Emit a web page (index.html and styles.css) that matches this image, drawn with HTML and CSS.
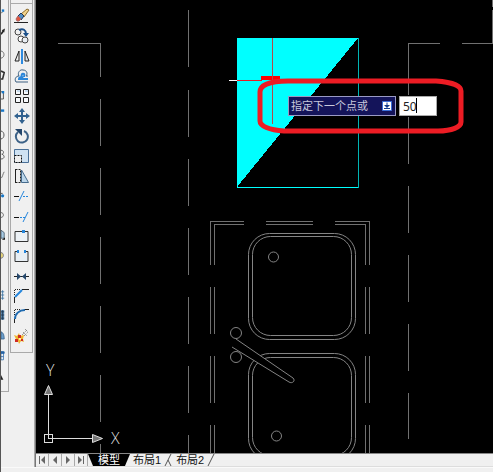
FILE: index.html
```html
<!DOCTYPE html>
<html lang="zh-CN">
<head>
  <meta charset="UTF-8" />
  <meta name="viewport" content="width=device-width, initial-scale=1.0"/>
  <title>CAD</title>
  <link rel="stylesheet" href="styles.css">
</head>
<body>

  <div class="workspace">

    <div class="dock">
      <div class="toolbar draw-tools">
        <button aria-label="直线"><svg viewBox="0 0 5 16"><path d="M0 6L2 4" stroke="#333"/><path d="M1 1h3v3H1z" fill="#1878c8"/></svg></button>
        <button aria-label="构造线"><svg viewBox="0 0 5 16"><path d="M0 7L3 3" stroke="#222" stroke-width="2"/><path d="M1 2l4-2-1 5z" fill="#222"/></svg></button>
        <button aria-label="圆弧"><svg viewBox="0 0 5 16"><path d="M0 3c5 1 5 8 0 9" fill="none" stroke="#555"/></svg></button>
        <button aria-label="多边形"><svg viewBox="0 0 5 16"><path d="M0 3l4 2-2 8H0" fill="none" stroke="#333" stroke-width="2"/></svg></button>
        <button aria-label="矩形"><svg viewBox="0 0 5 16"><path d="M0 4h3v9H0" fill="none" stroke="#333"/><path d="M1 3h3v3H1z" fill="#1878c8"/></svg></button>
        <button aria-label="多段线"><svg viewBox="0 0 5 16"><path d="M0 1h4v3H0z" fill="#1878c8"/></svg></button>
        <button aria-label="圆"><svg viewBox="0 0 5 16"><path d="M0 3c5 1 5 9 0 10" fill="none" stroke="#333" stroke-width="1"/></svg></button>
        <button aria-label="修订云线"><svg viewBox="0 0 5 16"><path d="M0 2c4 0 4 5 1 5 4 1 4 6-1 6" fill="none" stroke="#444" stroke-width="1"/></svg></button>
        <button aria-label="样条曲线"><svg viewBox="0 0 5 16"><path d="M0 12c2-1 2-5 4-8" fill="none" stroke="#555"/></svg></button>
        <button aria-label="椭圆"><svg viewBox="0 0 5 16"><path d="M0 6h2" stroke="#333"/><circle cx="2" cy="9" r="2" fill="#1878c8"/></svg></button>
        <button aria-label="椭圆弧"><svg viewBox="0 0 5 16"><path d="M0 5c4 0 4 6 0 6" fill="none" stroke="#555"/></svg></button>
        <button aria-label="插入块"><svg viewBox="0 0 5 16"><path d="M0 2l4 3v7H0z" fill="#a9cbe4" stroke="#456"/><path d="M1 14h4v-3z" fill="#111"/></svg></button>
        <button aria-label="创建块"><svg viewBox="0 0 5 16"><path d="M0 5c4 0 4 7 0 7" fill="#e8d77a" stroke="#667"/></svg></button>
        <button aria-label="点"><svg viewBox="0 0 5 16"></svg></button>
        <button aria-label="图案填充"><svg viewBox="0 0 5 16"><path d="M0 4h4M0 8h4M0 12h4M2 2v12" stroke="#35709f"/></svg></button>
        <button aria-label="渐变色"><svg viewBox="0 0 5 16"><path d="M0 2h4v12H0z" fill="#5d89ae"/><path d="M0 4h4M0 8h4M0 12h4M2 2v12" stroke="#1c3550"/></svg></button>
        <button aria-label="面域"><svg viewBox="0 0 5 16"><path d="M0 4c3 1 4 4 4 9H0z" fill="#6b9fcc" stroke="#35608a"/></svg></button>
        <button aria-label="表格"><svg viewBox="0 0 5 16"><path d="M0 4h3v10H0z" fill="#fff" stroke="#2765a6"/><path d="M0 4h4v2H0M0 10h3" stroke="#2765a6" fill="#2765a6"/></svg></button>
        <button aria-label="多行文字"><svg viewBox="0 0 5 16"><path d="M0 8l3 6H0z" fill="#222"/></svg></button>
      </div>

      <div class="toolbar-column">
        <div class="toolbar-end"></div>
        <div class="toolbar modify-tools">
          <button aria-label="删除">
            <svg viewBox="0 0 16 16">
              <path d="M0 14.500h14" stroke="#222"/>
              <path d="M7 6l6-5 2 1-5 7z" fill="#f0d28c" stroke="#8a6a2c"/>
              <path d="M4 8l3-3 3 3-3 4z" fill="#4f8dc5" stroke="#235"/>
              <path d="M2 11l2-3 3 3-2 2H3z" fill="#e2563f" stroke="#a66"/>
            </svg>
          </button>
          <button aria-label="复制">
            <svg viewBox="0 0 16 16" fill="none">
              <circle cx="4" cy="4" r="3" stroke="#444"/>
              <circle cx="7" cy="11" r="3" stroke="#444" fill="#fff"/>
              <circle cx="11" cy="12" r="3" stroke="#444" fill="#e8eef4"/>
              <path d="M5 2c4-2 7 0 7 4" stroke="#1a4f8a" stroke-width="2"/>
              <path d="M9 5h6l-3 4z" fill="#1a4f8a"/>
            </svg>
          </button>
          <button aria-label="镜像">
            <svg viewBox="0 0 16 16" fill="none">
              <path d="M5 3v10H1z" stroke="#222"/>
              <path d="M11 3v10h4z" stroke="#222" fill="#dde6ee"/>
              <path d="M8 1v15" stroke="#2d8ae0" stroke-width="2"/>
            </svg>
          </button>
          <button aria-label="偏移">
            <svg viewBox="0 0 16 16" fill="none">
              <path d="M14 14H2c-2-3 0-6 3-6-2-3 1-7 4-6 4 0 5 4 3 6h2" stroke="#3c5f80"/>
              <path d="M14 11H5c0-2 2-2 3-2-1-2 0-4 2-3 1 1 0 2 0 3" stroke="#2b86d9" stroke-width="2"/>
            </svg>
          </button>
          <button aria-label="阵列">
            <svg viewBox="0 0 16 16" fill="#f7f9fb" stroke="#222">
              <path d="M1.500 1.500h5v5h-5zM9.500 1.500h5v5h-5zM1.500 9.500h5v5h-5zM9.500 9.500h5v5h-5z"/>
              <path d="M3 3h3M11 3h3" stroke="#9cc1e3"/>
            </svg>
          </button>
          <button aria-label="移动">
            <svg viewBox="0 0 16 16" fill="#32628f">
              <path d="M8 0l3 4H9v3h3V5l4 3-4 3V9H9v3h2l-3 4-3-4h2V9H4v2L0 8l4-3v2h3V4H5z"/>
            </svg>
          </button>
          <button aria-label="旋转">
            <svg viewBox="0 0 16 16" fill="none">
              <path d="M10 3a6 6 0 1 1-6 1" stroke="#3d6287" stroke-width="2"/>
              <path d="M1 1h7v7z" fill="#24466b"/>
            </svg>
          </button>
          <button aria-label="缩放">
            <svg viewBox="0 0 16 16" fill="none">
              <path d="M.5 1.500h14v13H.5z" fill="#cfe2f2" stroke="#4a7097"/>
              <path d="M.5 7.500h7v7h-7z" fill="#eee" stroke="#111" stroke-dasharray="2 1"/>
            </svg>
          </button>
          <button aria-label="拉伸">
            <svg viewBox="0 0 16 16" fill="none">
              <path d="M1.500 1.500h5v13h-5z" stroke="#222" stroke-dasharray="2 1"/>
              <path d="M1.500 1v14" stroke="#222"/>
              <path d="M7.500 2l7 12.500h-7z" fill="#bcd6ea" stroke="#446a8c"/>
            </svg>
          </button>
          <button aria-label="修剪">
            <svg viewBox="0 0 16 16" fill="none">
              <path d="M0 8.500h5" stroke="#111" stroke-width="1"/>
              <path d="M5 13l5-10" stroke="#2586dc" stroke-width="1"/>
              <path d="M9 8.500h6" stroke="#2586dc" stroke-dasharray="2 1"/>
            </svg>
          </button>
          <button aria-label="延伸">
            <svg viewBox="0 0 16 16" fill="none">
              <path d="M0 9.500h5" stroke="#111" stroke-width="1"/>
              <path d="M6 9.500h5" stroke="#2586dc" stroke-dasharray="2 1"/>
              <path d="M9 14l5-10" stroke="#2586dc" stroke-width="1"/>
            </svg>
          </button>
          <button aria-label="打断于点">
            <svg viewBox="0 0 16 16">
              <path d="M1 3.500h13v10H1z" fill="#edf2f6" stroke="#333"/>
              <path d="M8 2h3v3H8z" fill="#2586dc"/>
            </svg>
          </button>
          <button aria-label="打断">
            <svg viewBox="0 0 16 16">
              <path d="M3 3.500H1v10h13v-10h-2" fill="#e7eef4" stroke="#333"/>
              <path d="M3 2h2v3H3zM10 2h2v3h-2z" fill="#2586dc"/>
            </svg>
          </button>
          <button aria-label="合并">
            <svg viewBox="0 0 16 16">
              <path d="M0 8.500h15" stroke="#222"/>
              <path d="M3 5l4 3.500L3 12zM12 5L8 8.500l4 3.500z" fill="#25476b"/>
            </svg>
          </button>
          <button aria-label="倒角">
            <svg viewBox="0 0 16 16" fill="none">
              <path d="M1 1.500h6M.5 2v6" stroke="#222" stroke-dasharray="1 1"/>
              <path d="M.5 15V9M8 1.500h7" stroke="#222"/>
              <path d="M1 9l7-7" stroke="#2586dc" stroke-width="2"/>
            </svg>
          </button>
          <button aria-label="圆角">
            <svg viewBox="0 0 16 16" fill="none">
              <path d="M1 1.500h6M.5 2v6" stroke="#222" stroke-dasharray="1 1"/>
              <path d="M.5 15v-4M10 1.500h5" stroke="#222"/>
              <path d="M1 11c0-5 4-9 10-9" stroke="#206bb0" stroke-width="2"/>
            </svg>
          </button>
          <button aria-label="分解">
            <svg viewBox="0 0 16 16">
              <path d="M0 7l3 1 2-3 1 3 4-1-1 4 1 3-3-1-2 3-1-3-3 1 1-3z" fill="#f0b52e"/>
              <path d="M1 11h3v3H1zM4 7h3v3H4zM7 11h2v2H7z" fill="#d02a22"/>
              <path d="M8 7l5-5M10 8l4-4M9 4l4 4M11 1l3 3" stroke="#777" stroke-dasharray="1 1"/>
              <path d="M5 10h2v2H5z" fill="#fff3a0"/>
            </svg>
          </button>
        </div>
      </div>
    </div>

    <main class="viewport">
      <div class="canvas">
        <svg class="drawing">
          <!-- drawing units start at the window edge, the dock takes 36 of them -->
          <g transform="translate(-36 0)" fill="none" stroke="#707070" shape-rendering="crispEdges">

            <!-- walls -->
            <path d="M58 43.500H100.500V77"/>
            <path d="M100.500 99V453" stroke-dasharray="47 22"/>
            <path d="M188.500 10V67"/>
            <path d="M188.500 90V453" stroke-dasharray="47 22"/>
            <path d="M440 43.500H408.500V95"/>
            <path d="M408.500 117V439" stroke-dasharray="47 22"/>
            <path d="M462 43.500H492.500V10M492.500 0V7"/>

            <!-- counter -->
            <path d="M244 221.500H210.500V265M244 224.500H214.500V265"/>
            <path d="M266 221.500H313M266 224.500H313"/>
            <path d="M335 221.500H369.500V265M335 224.500H365.500V265"/>
            <path d="M210.500 287V453M214.500 287V453M365.500 287V453M369.500 287V453" stroke-dasharray="47 22"/>

            <!-- sinks and tap -->
            <g shape-rendering="auto" stroke="#848484">
              <rect x="248.500" y="233.500" width="107" height="106" rx="21"/>
              <rect x="252.500" y="236.500" width="99" height="99" rx="18"/>
              <rect x="248.500" y="353.500" width="107" height="106" rx="21"/>
              <rect x="252.500" y="357.500" width="99" height="98" rx="18"/>
              <circle cx="273.500" cy="257" r="5"/>
              <circle cx="276.500" cy="436" r="5"/>
              <circle cx="236" cy="333" r="5.500"/>
              <circle cx="236" cy="357" r="5.500"/>
              <path d="M236 339L293 378C296 381 292 384 289 382L232 347" fill="#000"/>
            </g>

            <!-- hatched box -->
            <path d="M237 38H358L237 187z" fill="#0ff" stroke="none" />
            <path d="M237.500 187V38.500H358M237 187.500H358" stroke="#0ff"/>
            <path d="M358.500 38V188" stroke="#00b4b4"/>

            <!-- crosshair -->
            <path d="M229 80.500H237" stroke="#fff"/>
            <path d="M237 80.500H262" stroke="#e81c24"/>
            <path d="M261 78H280" stroke="#f00" stroke-width="4"/>
            <path d="M272.500 38V124" stroke="#b84848"/>

            <!-- marker ring -->
            <path d="M288 81H436C452 82 461 86 461 91V122C461 127 452 131 438 131H284C269 130 260 126 260 121V92C260 86 268 81 288 81z" stroke="#ed1c24" stroke-width="5" shape-rendering="auto"/>

            <!-- UCS icon -->
            <g stroke="#ddd">
              <path d="M44.500 434.500H52.500V442.500H44.500zM48.500 438V386M48 438.500H102"/>
              <path d="M44.500 394.500L48.500 385.500L52.500 394.500zM92.500 434.500L102.500 438.500L92.500 442.500z" fill="#777" shape-rendering="auto"/>
            </g>
            <g class="axis-label" stroke="none">
              <text x="46" y="376">Y</text>
              <text x="111" y="444">X</text>
            </g>
          </g>
        </svg>

        <form class="prompt">
          <div class="prompt-box">
            <label for="distance">指定下一个点或</label>
            <button type="button" class="more" aria-label="选项">
              <svg viewBox="0 0 10 10">
                <path d="M.5.5h9v9h-9z" fill="#fff" stroke="#3a6ed8"/>
                <path d="M5 1.500V6M2 7.500h6" stroke="#123a8c"/>
                <path d="M2 4h6L5 7z" fill="#123a8c"/>
              </svg>
            </button>
          </div>
          <div class="field">
            <input type="text" id="distance" value="50" autocomplete="off">
            <span class="caret"></span>
          </div>
        </form>
      </div>

      <nav class="layout-bar">
        <button class="step" aria-label="第一个"><svg viewBox="0 0 12 12"><path d="M3 2h1v8H3zM9 2v8L5 6z"/></svg></button>
        <button class="step" aria-label="上一个"><svg viewBox="0 0 12 12"><path d="M8 2v8L4 6z"/></svg></button>
        <button class="step" aria-label="下一个"><svg viewBox="0 0 12 12"><path d="M4 2v8l4-4z"/></svg></button>
        <button class="step" aria-label="最后一个"><svg viewBox="0 0 12 12"><path d="M3 2v8l4-4zM8 2h1v8H8z"/></svg></button>
        <button class="tab active">模型</button>
        <button class="tab">布局1</button>
        <svg class="divider" viewBox="0 0 9 12"><path d="M1 12L7 0M4 6L7 12"/></svg>
        <button class="tab">布局2</button>
        <svg class="divider" viewBox="0 0 9 12"><path d="M1 12L7 0"/></svg>
      </nav>
    </main>

  </div>

  <div class="status-bar"></div>

</body>
</html>
```
FILE: styles.css
```css
body {
  margin: 0;
  height: 100vh;
  display: flex;
  flex-direction: column;
  box-sizing: border-box;
  border-left: 1px solid #555;
  background: #f0f0f0;
  font-family: "Liberation Sans", "Noto Sans CJK SC", sans-serif;
  font-size: 11px;
  overflow: hidden;
}

button {
  border: none;
  padding: 0;
  margin: 0;
  background: none;
  color: inherit;
  font: inherit;
}

.workspace {
  flex: 1;
  min-height: 0;
  display: flex;
}

.dock {
  display: flex;
  align-items: flex-start;
  gap: 1px;
  border-right: 1px solid #777;
}

.toolbar {
  display: flex;
  flex-direction: column;
  border-right: 1px solid #aaa;
  border-bottom: 1px solid #aaa;
}

.toolbar button {
  height: 20px;
  display: flex;
  align-items: center;
  justify-content: center;
}

.draw-tools {
  width: 7px;
  padding: 5px 0 6px;
}

.draw-tools button {
  justify-content: flex-start;
}

.draw-tools svg {
  width: 4px;
  height: 16px;
}

.toolbar-column {
  padding-right: 1px;
  border-right: 1px solid #aaa;
  align-self: stretch;
}

.toolbar-end {
  height: 3px;
  border: 1px solid #aaa;
  border-top: none;
}

.modify-tools {
  width: 21px;
  padding: 2px 0 6px;
  border-left: 1px solid #aaa;
}

.modify-tools svg {
  width: 16px;
  height: 16px;
}

.viewport {
  flex: 1;
  min-width: 0;
  display: flex;
  flex-direction: column;
}

.canvas {
  flex: 1;
  min-height: 0;
  position: relative;
  background: #000;
  overflow: hidden;
}

.drawing {
  display: block;
  width: 100%;
  height: 100%;
}

.axis-label {
  fill: #ddd;
  font-family: "Open Sans", sans-serif;
  font-weight: 300;
  font-size: 16px;
}

/* dynamic input next to the cursor */
.prompt {
  position: absolute;
  left: 252px;
  top: 96px;
  display: flex;
  gap: 3px;
}

.prompt-box {
  box-sizing: border-box;
  width: 108px;
  height: 20px;
  padding: 0 3px 0 2px;
  display: flex;
  align-items: center;
  justify-content: space-between;
  border: 1px solid #9a9ac4;
  background: #14145a;
  color: #c8c8dc;
  line-height: 16px;
  white-space: nowrap;
}

.more {
  display: flex;
}

.more svg {
  width: 10px;
  height: 10px;
}

.field {
  position: relative;
  display: flex;
}

.field input {
  box-sizing: border-box;
  width: 38px;
  height: 20px;
  padding: 0 3px;
  border: 1px solid #aaa;
  border-radius: 0;
  background: #fff;
  color: #222;
  font-family: "Noto Sans", sans-serif;
  font-size: 12px;
  outline: none;
}

.caret {
  position: absolute;
  left: 17px;
  top: 2px;
  width: 1px;
  height: 15px;
  background: #000;
}

.layout-bar {
  height: 12px;
  display: flex;
  border-top: 1px solid #888;
  border-bottom: 1px solid #ddd;
  color: #111;
}

.step {
  width: 13px;
  display: flex;
  align-items: center;
  border-right: 1px solid #aaa;
}

.step svg {
  width: 12px;
  height: 12px;
  fill: #666;
}

.tab {
  padding: 0 3px;
  line-height: 12px;
  white-space: nowrap;
}

.tab.active {
  width: 42px;
  background: #000;
  color: #fff;
  clip-path: polygon(0 0, 100% 0, 88% 100%, 12% 100%);
}

.divider {
  width: 9px;
  height: 12px;
  fill: none;
  stroke: #555;
}

.status-bar {
  height: 4px;
  border-top: 1px solid #fafafa;
}
```
